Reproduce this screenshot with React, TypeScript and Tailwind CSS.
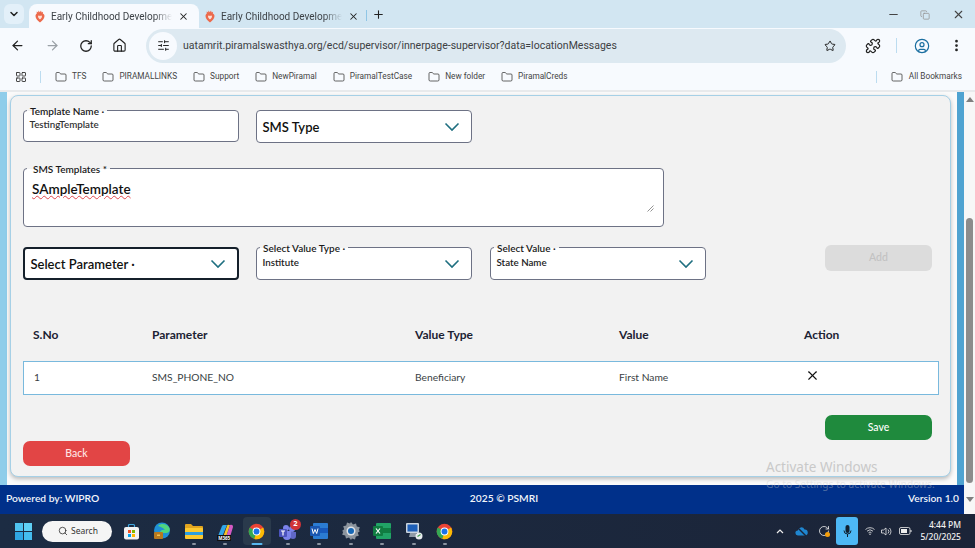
import { ArrowLeft, ArrowRight, ChevronDown, CircleUser, Copy, EllipsisVertical, Folder, House, LayoutGrid, Minus, Plus, Puzzle, RotateCw, Search, SlidersHorizontal, Star, X } from "lucide-react";
import type { ReactNode } from "react";

const bookmarks = ["TFS", "PIRAMALLINKS", "Support", "NewPiramal", "PiramalTestCase", "New folder", "PiramalCreds"];

function Favicon() {
  return (
    <svg width="10" height="13" viewBox="0 0 10 13" className="shrink-0">
      <path d="M5 12.500C2.500 10.800 .5 8.500 .5 6c0-1.300.6-2.200 1.300-2.600L1.700 1.500l1.500 1L3.500.5l1.300 1.700L6 .5l.6 2 1.400-.8-.2 1.800C8.900 4 9.500 5 9.500 6c0 2.500-2 4.800-4.500 6.500z" fill="#ec6a4c" />
      <path d="M5 9.500C3.800 8.500 3 7.500 3 6.500 3 5.300 4.300 5 5 6c.7-1 2-.7 2 .5 0 1-.8 2-2 3z" fill="#fde0d6" />
    </svg>
  );
}

function Tab({ active }: { active?: boolean }) {
  return (
    <div className={`flex h-[24px] w-[170px] items-center rounded-t-[8px] pl-[6px] pr-[10px] ${active ? "bg-[#f7fafe]" : ""}`}>
      <Favicon />
      <span className="ml-[6px] whitespace-nowrap text-[10px] text-[#3d4247] [mask-image:linear-gradient(to_right,black_85%,transparent)]">
        Early Childhood Developme
      </span>
      <X size={11} strokeWidth={2.2} className="ml-auto text-[#222]" />
    </div>
  );
}

function BrowserBar() {
  return (
    <div className="font-['Roboto',sans-serif]">
      <div className="flex h-[28px] items-end bg-[#d2e6f2]">
        <div className="mb-[4px] ml-[4px] mr-[5px] flex h-[20px] w-[20px] items-center justify-center rounded-[6px] bg-[#e3f0f9]">
          <ChevronDown size={12} strokeWidth={3} className="text-[#222]" />
        </div>
        <Tab active />
        <Tab />
        <div className="mb-[7px] -ml-[3px] h-[11px] w-[1px] bg-[#8fc6e6]" />
        <Plus size={13} strokeWidth={2} className="mb-[7px] ml-[5px] text-[#222]" />
        <div className="mb-[7px] ml-auto flex items-center text-[#444]">
          <Minus size={13} className="mr-[20px]" />
          <Copy size={10} className="mr-[22px] text-[#999]" />
          <X size={13} className="mr-[10px]" />
        </div>
      </div>

      <div className="flex h-[35px] items-center bg-[#f7fafe] pl-[10px]">
        <ArrowLeft size={15} strokeWidth={2} className="text-[#222]" />
        <ArrowRight size={15} strokeWidth={2} className="ml-[20px] text-[#9aa0a6]" />
        <RotateCw size={14} strokeWidth={2.2} className="ml-[19px] text-[#222]" />
        <House size={15} strokeWidth={1.8} className="ml-[19px] text-[#222]" />
        <div className="ml-[19px] flex h-[34px] w-[700px] items-center rounded-full bg-[#dde9f1] pl-[3px] pr-[10px]">
          <div className="flex h-[28px] w-[28px] items-center justify-center rounded-full bg-[#f7fafe]">
            <SlidersHorizontal size={13} strokeWidth={1.8} className="text-[#222]" />
          </div>
          <span className="ml-[6px] whitespace-nowrap text-[10.5px] text-[#3c4043]">
            uatamrit.piramalswasthya.org/ecd/supervisor/innerpage-supervisor?data=locationMessages
          </span>
          <Star size={12} strokeWidth={2} className="ml-auto text-[#222]" />
        </div>
        <Puzzle size={16} strokeWidth={1.8} className="ml-[19px] text-[#222]" />
        <div className="ml-[15px] h-[15px] w-[1px] bg-[#bcdcf0]" />
        <CircleUser size={16} strokeWidth={1.8} className="ml-[17px] text-[#1a6ea0]" />
        <EllipsisVertical size={15} strokeWidth={2.4} className="ml-[19px] text-[#222]" />
      </div>

      <div className="flex h-[29px] items-center border-b-[2px] border-[#e8eaec] bg-[#f7fafe] pl-[15px] text-[8.25px] text-[#444]">
        <LayoutGrid size={12} strokeWidth={1.8} className="text-[#333]" />
        <div className="ml-[13px] mr-[14px] h-[12px] w-[1px] bg-[#bcdcf0]" />
        <div className="flex gap-[16px]">
          {bookmarks.map((b) => (
            <div key={b} className="flex items-center gap-[5px]">
              <Folder size={12} strokeWidth={1.5} className="text-[#333]" />
              <span>{b}</span>
            </div>
          ))}
        </div>
        <div className="ml-auto mr-[14px] h-[12px] w-[1px] bg-[#bcdcf0]" />
        <div className="mr-[13px] flex items-center gap-[6px]">
          <Folder size={12} strokeWidth={1.5} className="text-[#333]" />
          <span>All Bookmarks</span>
        </div>
      </div>
    </div>
  );
}

function Label({ children }: { children: ReactNode }) {
  return (
    <span className="absolute -top-[6px] left-[3px] whitespace-nowrap bg-[linear-gradient(to_bottom,#f2f2f2_50%,#ffffff_50%)] px-[3px] text-[10px] font-semibold leading-[12px] text-[#1a1a1a]">
      {children}
    </span>
  );
}

function Chevron() {
  return (
    <svg width="16" height="9" viewBox="0 0 16 9" className="absolute right-[11px] top-1/2 -translate-y-1/2">
      <path d="M1.500 1l6.500 6.500L14.500 1" fill="none" stroke="#1f6f80" strokeWidth="1.600" />
    </svg>
  );
}

function SelectBox({ label, value, placeholder, strong }: { label?: string; value?: string; placeholder?: string; strong?: boolean }) {
  return (
    <div className={`relative h-[33px] w-[216px] rounded-[4px] bg-white ${strong ? "border-[2px] border-[#15202b]" : "border-[1.5px] border-[#6d7285]"}`}>
      {label && <Label>{label} ·</Label>}
      {value && <span className="absolute left-[5.500px] top-[7px] text-[9.75px] font-semibold text-[#222]">{value}</span>}
      {placeholder && <span className={`absolute left-[5.500px] text-[13px] font-semibold leading-[17px] text-[#111] ${strong ? "top-[7px]" : "top-[8px]"}`}>{placeholder}</span>}
      <Chevron />
    </div>
  );
}

function Form() {
  return (
    <div className="flex h-[382px] w-[941px] flex-col rounded-[8px] border border-[#a6d0e6] bg-[#f2f2f2] pl-[12px] pr-[12px] pt-[14px] shadow-[0_2px_4px_rgba(0,0,0,0.25)]">
      <div className="flex items-start gap-[17px]">
        <div className="relative h-[32px] w-[216px] rounded-[4px] border-[1.5px] border-[#6d7285] bg-white">
          <Label>Template Name ·</Label>
          <span className="absolute left-[5.500px] top-[6px] text-[9.75px] font-semibold text-[#333]">TestingTemplate</span>
        </div>
        <SelectBox placeholder="SMS Type" />
      </div>

      <div className="relative mt-[25px] h-[59px] w-[641px] rounded-[4px] border-[1.5px] border-[#6d7285] bg-white">
        <Label>
          <span className="ml-[3px]">SMS Templates *</span>
        </Label>
        <span className="absolute left-[8px] top-[12px] text-[13.500px] font-semibold leading-[17px] text-[#111] underline decoration-[#e0484d] decoration-wavy decoration-[1px] underline-offset-1">
          SAmpleTemplate
        </span>
        <svg width="7" height="7" viewBox="0 0 7 7" className="absolute bottom-[14px] right-[9px]">
          <path d="M0.500 6.500L6.500 0.500M3.500 6.500L6.500 3.500" stroke="#777" strokeWidth="0.800" />
        </svg>
      </div>

      <div className="mt-[20px] flex items-start">
        <SelectBox placeholder="Select Parameter ·" strong />
        <div className="ml-[17px]">
          <SelectBox label="Select Value Type" value="Institute" />
        </div>
        <div className="ml-[18px]">
          <SelectBox label="Select Value" value="State Name" />
        </div>
        <button className="-mt-[2px] ml-[119px] flex h-[26px] w-[107px] items-center justify-center rounded-[6px] bg-[#dcdcdc] text-[10.5px] font-medium text-[#c2c2c2]">
          Add
        </button>
      </div>

      <div className="mt-[48px] grid w-[916px] grid-cols-[119px_263px_204px_185px_1fr] pl-[10px] text-[12px] font-bold leading-[14px] text-[#1c2233]">
        <span>S.No</span>
        <span>Parameter</span>
        <span>Value Type</span>
        <span>Value</span>
        <span>Action</span>
      </div>

      <div className="mt-[19px] grid h-[34px] w-[916px] grid-cols-[119px_263px_204px_185px_1fr] items-center border border-[#79b9dd] bg-white pl-[9px] text-[10.25px] text-[#3a3f45]">
        <span className="pl-[1px]">1</span>
        <span>SMS_PHONE_NO</span>
        <span>Beneficiary</span>
        <span>First Name</span>
        <X size={15} strokeWidth={1.8} className="-mt-[5px] ml-[1px] text-[#111]" />
      </div>

      <div className="mt-[20px] flex w-[909px] justify-end">
        <button className="flex h-[25px] w-[107px] items-center justify-center rounded-[7px] bg-[#1f8a3d] text-[10.5px] font-medium text-white">
          Save
        </button>
      </div>
      <button className="mt-[1px] flex h-[25px] w-[107px] items-center justify-center rounded-[7px] bg-[#e24545] text-[10.5px] font-medium text-[#ffe3e3]">
        Back
      </button>
    </div>
  );
}

function Scrollbar() {
  return (
    <div className="flex w-[11px] flex-col items-center bg-[#f7f7f7] pt-[5px]">
      <div className="h-0 w-0 border-x-[4px] border-b-[5px] border-x-transparent border-b-[#7f7f7f]" />
      <div className="mt-[116px] h-[265px] w-[7px] rounded-full bg-[#8c8c8c]" />
      <div className="mt-[14px] h-0 w-0 border-x-[4px] border-t-[5px] border-x-transparent border-t-[#7f7f7f]" />
    </div>
  );
}

function ChromeLogo({ size = 17 }: { size?: number }) {
  return (
    <svg width={size} height={size} viewBox="0 0 24 24">
      <circle cx="12" cy="12" r="11" fill="#ea4335" />
      <path d="M12 12L2.500 6.500A11 11 0 0 0 9 22.600z" fill="#34a853" />
      <path d="M12 12L21.500 6.500 22.900 12A11 11 0 0 1 9 22.600z" fill="#fbbc04" />
      <circle cx="12" cy="12" r="5.500" fill="#fff" />
      <circle cx="12" cy="12" r="4.200" fill="#1a73e8" />
    </svg>
  );
}

function TaskIcon({ children, selected, dot = true }: { children: ReactNode; selected?: boolean; dot?: boolean }) {
  return (
    <div className={`relative flex h-[28px] w-[28px] items-center justify-center rounded-[4px] ${selected ? "bg-[#2a3a4c]" : ""}`}>
      {children}
      {dot && <div className={`absolute bottom-[0px] left-1/2 h-[2px] -translate-x-1/2 rounded-full ${selected ? "w-[11px] bg-[#58b8f0]" : "w-[4px] bg-[#8a93a0]"}`} />}
    </div>
  );
}

function Taskbar() {
  return (
    <div className="flex h-[34px] items-center bg-[linear-gradient(to_right,#1c2c43,#1b2438)] pl-[15px] font-['Noto_Sans',sans-serif]">
      <svg width="17" height="17" viewBox="0 0 17 17">
        <rect width="8" height="8" fill="#4fc3f0" />
        <rect x="9" width="8" height="8" fill="#5fd0f5" />
        <rect y="9" width="8" height="8" fill="#2fa6e3" />
        <rect x="9" y="9" width="8" height="8" fill="#45bdee" />
      </svg>
      <div className="ml-[10px] mr-[5px] flex h-[21px] w-[70px] items-center rounded-full bg-[#f5f5f5] pl-[16px] text-[8.5px] text-[#333]">
        <Search size={10} strokeWidth={1.8} className="mr-[3px] text-[#222]" />
        Search
      </div>
      <div className="flex gap-[3.400px]">
        <TaskIcon dot={false}>
          <svg width="17" height="17" viewBox="0 0 17 17">
            <path d="M5.500 4V2.500A1 1 0 0 1 6.500 1.500h4a1 1 0 0 1 1 1V4" fill="none" stroke="#3fa7e0" strokeWidth="1.200" />
            <rect x="1" y="4" width="15" height="12.500" rx="2" fill="#f2f2f2" />
            <rect x="5" y="7" width="3" height="3" fill="#f25022" />
            <rect x="9" y="7" width="3" height="3" fill="#7fba00" />
            <rect x="5" y="11" width="3" height="3" fill="#00a4ef" />
            <rect x="9" y="11" width="3" height="3" fill="#ffb900" />
          </svg>
        </TaskIcon>
        <TaskIcon dot={false}>
          <svg width="18" height="18" viewBox="0 0 18 18">
            <circle cx="9" cy="8.500" r="8" fill="#1f8fd6" />
            <path d="M5 4c3-3 9-2.500 11.500 2 1 3-1 5-4 5H7c0-3 3-3.500 5-3-1-2-4-3-7-4z" fill="#4fd67e" />
            <rect x="1" y="10" width="9" height="7" rx="1" fill="#b7791f" />
            <rect x="4" y="12.500" width="3" height="1.500" fill="#f2c14e" />
          </svg>
        </TaskIcon>
        <TaskIcon>
          <svg width="18" height="16" viewBox="0 0 18 16">
            <path d="M0 2a1 1 0 0 1 1-1h5l2 2h9a1 1 0 0 1 1 1v3H0z" fill="#e0a420" />
            <rect y="5" width="18" height="11" rx="1" fill="#fcc92f" />
            <rect x="0" y="9" width="18" height="3" fill="#2d9fe0" />
          </svg>
        </TaskIcon>
        <TaskIcon>
          <div className="relative">
            <svg width="18" height="15" viewBox="0 0 18 15">
              <path d="M2 12L6 2a2 2 0 0 1 2-1h3L6 13H3z" fill="#2fa6e8" />
              <path d="M7 13L11 2a1.500 1.500 0 0 1 2-1h1L10 13z" fill="#f7c325" />
              <path d="M10 13L14 1a2 2 0 0 1 3 2l-3 10z" fill="#d65ac4" />
            </svg>
            <span className="absolute -bottom-[2px] left-[1px] bg-[#111] px-[1px] text-[4.500px] font-bold leading-[6px] text-white">M365</span>
          </div>
        </TaskIcon>
        <TaskIcon selected>
          <ChromeLogo />
        </TaskIcon>
        <TaskIcon>
          <div className="relative">
            <svg width="18" height="17" viewBox="0 0 18 17">
              <circle cx="13" cy="6" r="3" fill="#7b83eb" />
              <path d="M9 9h8v4a3 3 0 0 1-6 0z" fill="#6068c8" />
              <circle cx="7" cy="5" r="3" fill="#7b83eb" />
              <path d="M4 8h8v5a4 4 0 0 1-8 0z" fill="#7b83eb" />
              <rect x="0" y="6" width="8" height="8" rx="1" fill="#4b53bc" />
              <path d="M2 8h4M4 8v4.500" stroke="#fff" strokeWidth="1.200" />
            </svg>
            <span className="absolute -right-[4px] -top-[4px] flex h-[11px] w-[11px] items-center justify-center rounded-full bg-[#d13438] text-[7.500px] font-bold text-white">2</span>
          </div>
        </TaskIcon>
        <TaskIcon>
          <svg width="18" height="16" viewBox="0 0 18 16">
            <rect x="3" width="15" height="16" rx="1" fill="#2b7cd3" />
            <rect x="3" y="5" width="15" height="5" fill="#185abd" />
            <rect y="3" width="10" height="10" rx="1" fill="#1a56b0" />
            <path d="M2 5.500l1.300 5 1.700-4 1.700 4 1.300-5" fill="none" stroke="#fff" strokeWidth="1" />
          </svg>
        </TaskIcon>
        <TaskIcon>
          <svg width="18" height="18" viewBox="0 0 18 18">
            <path d="M9 0l2 2.500 3-1 .8 3 3 .8-1 3L18 9l-2.200 1.700 1 3-3 .8-.8 3-3-1L9 18l-2-2.500-3 1-.8-3-3-.8 1-3L0 9l2.200-1.700-1-3 3-.8.8-3 3 1z" fill="#8b949e" />
            <circle cx="9" cy="9" r="4.500" fill="#dfe3e8" />
            <circle cx="9" cy="9" r="3" fill="#1667b5" />
          </svg>
        </TaskIcon>
        <TaskIcon>
          <svg width="18" height="16" viewBox="0 0 18 16">
            <rect x="3" width="15" height="16" rx="1" fill="#21a366" />
            <rect x="10" y="5" width="8" height="5" fill="#107c41" />
            <rect y="3" width="10" height="10" rx="1" fill="#107c41" />
            <path d="M3 5.500l4 5M7 5.500l-4 5" stroke="#fff" strokeWidth="1.200" />
          </svg>
        </TaskIcon>
        <TaskIcon>
          <svg width="18" height="18" viewBox="0 0 18 18">
            <rect x="1" y="1" width="13" height="10" rx="1" fill="#c9d3de" />
            <rect x="2.500" y="2.500" width="10" height="7" fill="#1d5fb8" />
            <path d="M5 11h6l2 4H4z" fill="#8f9aa6" />
            <circle cx="14" cy="14" r="3.500" fill="#e9edf0" />
            <path d="M12.500 14.500l3-2" stroke="#3b9b4a" strokeWidth="1.200" />
          </svg>
        </TaskIcon>
        <TaskIcon>
          <ChromeLogo />
        </TaskIcon>
      </div>

      <div className="ml-auto flex items-center text-[#f0f0f0]">
        <svg width="8" height="5" viewBox="0 0 8 5">
          <path d="M1 4l3-3 3 3" fill="none" stroke="#eee" strokeWidth="1.200" />
        </svg>
        <svg width="13" height="11" viewBox="0 0 13 11" className="ml-[11px]">
          <path d="M3 9.500a2.500 2.500 0 0 1-.2-5A3.500 3.500 0 0 1 9.500 3.500 3 3 0 0 1 10 9.500z" fill="#1f86d0" />
          <path d="M2 1l9 9" stroke="#1b2438" strokeWidth="1.400" />
        </svg>
        <div className="relative ml-[10px]">
          <RotateCw size={12} strokeWidth={1.600} />
          <div className="absolute bottom-0 right-0 h-[5px] w-[5px] rounded-full bg-[#f59e0b]" />
        </div>
        <div className="ml-[6px] flex h-[28px] w-[22px] items-center justify-center rounded-[3px] bg-[#4db8f5]">
          <svg width="9" height="13" viewBox="0 0 9 13">
            <rect x="2.500" y="0" width="4" height="8" rx="2" fill="#10202f" />
            <path d="M1 5.500a3.500 3.500 0 0 0 7 0M4.500 9v3" fill="none" stroke="#10202f" strokeWidth="1" />
          </svg>
        </div>
        <svg width="10" height="8" viewBox="0 0 10 8" className="ml-[7px]">
          <path d="M.5 2.500a6.500 6.500 0 0 1 9 0M2 4.200a4.300 4.300 0 0 1 6 0M3.500 5.800a2 2 0 0 1 3 0" fill="none" stroke="#eee" strokeWidth=".800" />
          <circle cx="5" cy="7.200" r=".700" fill="#eee" />
        </svg>
        <svg width="11" height="9" viewBox="0 0 11 9" className="ml-[6px]">
          <path d="M.5 3h2L5 1v7L2.500 6h-2z" fill="none" stroke="#eee" strokeWidth=".800" />
          <path d="M7 2.500a3 3 0 0 1 0 4M8.500 1a5 5 0 0 1 0 7" fill="none" stroke="#eee" strokeWidth=".800" />
        </svg>
        <svg width="13" height="8" viewBox="0 0 13 8" className="ml-[7px]">
          <rect x=".5" y=".5" width="10.500" height="7" rx="1.500" fill="none" stroke="#eee" strokeWidth=".800" />
          <rect x="2" y="2" width="6" height="4" fill="#eee" />
          <rect x="11.500" y="3" width="1" height="2" fill="#eee" />
        </svg>
        <div className="ml-[8px] mr-[14px] text-right text-[8.5px] font-medium leading-[12px]">
          <div>4:44 PM</div>
          <div>5/20/2025</div>
        </div>
      </div>
    </div>
  );
}

export default function App() {
  return (
    <div className="relative h-[548px] w-[975px] overflow-hidden bg-white font-['Lato',sans-serif]">
      <BrowserBar />

      <div className="flex h-[422px]">
        <div className="flex w-[964px] flex-col">
          <div className="flex h-[393px] bg-[linear-gradient(to_right,#8fcdea_7px,#fafafa_7px,#fafafa_957px,#4fa3d1_957px)] pl-[10px] pt-[3px]">
            <Form />
          </div>
          <div className="grid h-[29px] grid-cols-3 items-center bg-[#00308a] pb-[2px] pl-[6px] pr-[5px] text-[10.25px] font-semibold text-[#f2f5fa]">
            <span>Powered by: WIPRO</span>
            <span className="pl-[43px] text-center">2025 © PSMRI</span>
            <span className="text-right">Version 1.0</span>
          </div>
        </div>
        <Scrollbar />
      </div>

      <Taskbar />

      <div className="pointer-events-none absolute left-[766px] top-[461px] font-['Noto_Sans',sans-serif] leading-none">
        <div className="text-[13.5px] text-[#c9c9c9]">Activate Windows</div>
        <div className="mt-[4px] whitespace-nowrap text-[10.2px] text-[#c9c9c9]/40">Go to Settings to activate Windows.</div>
      </div>
    </div>
  );
}
